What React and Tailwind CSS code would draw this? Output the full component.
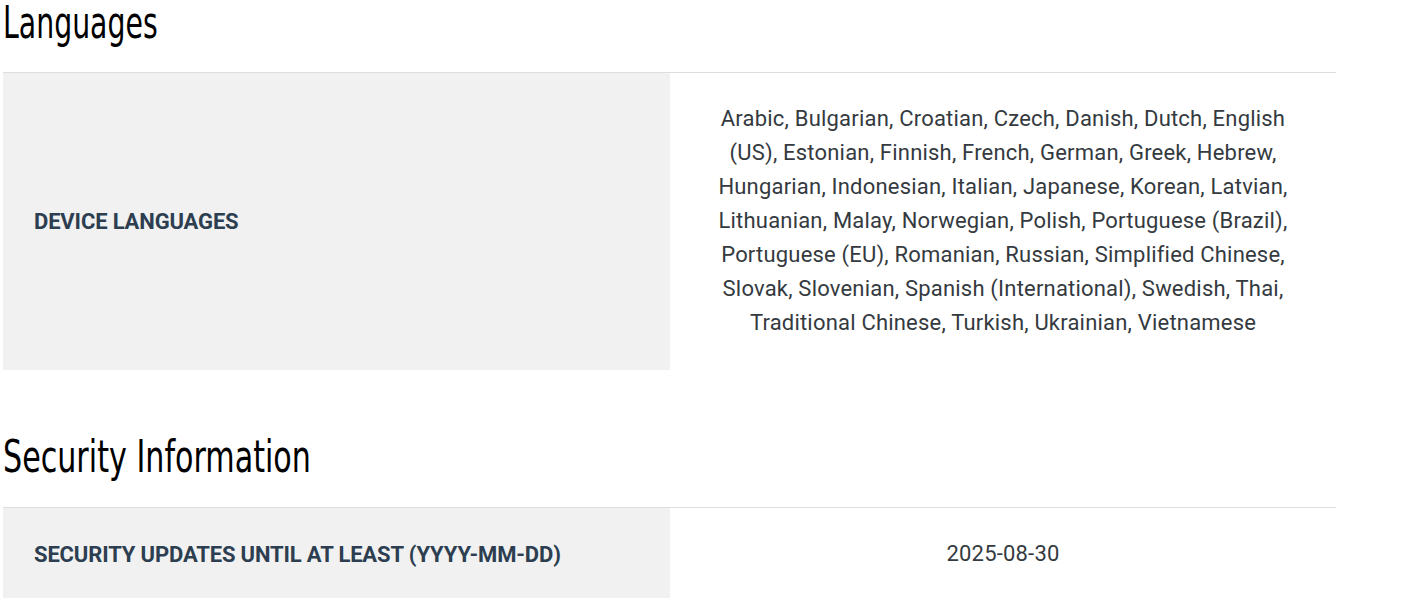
import React from "react";

const langs =
  "Arabic, Bulgarian, Croatian, Czech, Danish, Dutch, English (US), Estonian, Finnish, French, German, Greek, Hebrew, Hungarian, Indonesian, Italian, Japanese, Korean, Latvian, Lithuanian, Malay, Norwegian, Polish, Portuguese (Brazil), Portuguese (EU), Romanian, Russian, Simplified Chinese, Slovak, Slovenian, Spanish (International), Swedish, Thai, Traditional Chinese, Turkish, Ukrainian, Vietnamese";

function Heading({ children, className = "", scale }) {
  return (
    <h2
      className={`text-[45px] leading-[45px] font-normal text-black whitespace-nowrap ${className}`}
      style={{ fontFamily: '"DejaVu Sans", sans-serif' }}
    >
      <span className={`inline-block origin-left ${scale}`}>{children}</span>
    </h2>
  );
}

function Row({ label, value }) {
  return (
    <div className="flex border-t border-[#dddddd]">
      <div className="w-[667px] shrink-0 bg-[#f1f1f1] flex items-center pl-[31px] pr-4 text-[22px] font-bold uppercase text-[#2c3e50] tracking-[-0.15px]">
        {label}
      </div>
      <div className="flex-1 pt-[29px] pb-[30px] px-[30px] text-center text-[22px] leading-[34px] tracking-[0.2px] text-[#343a40]">
        {value}
      </div>
    </div>
  );
}

export default function App() {
  return (
    <div className="bg-white min-h-[598px] overflow-hidden" style={{ fontFamily: 'Roboto, "Liberation Sans", sans-serif' }}>
      <div className="ml-[3px] w-[1333px]">
        <Heading className="mb-[27px]" scale="scale-x-[0.63]">Languages</Heading>
        <Row label="Device Languages" value={langs} />
        <Heading className="mt-[64px] mb-[28px]" scale="scale-x-[0.67]">Security Information</Heading>
        <Row label="Security updates until at least (YYYY-MM-DD)" value="2025-08-30" />
      </div>
    </div>
  );
}
